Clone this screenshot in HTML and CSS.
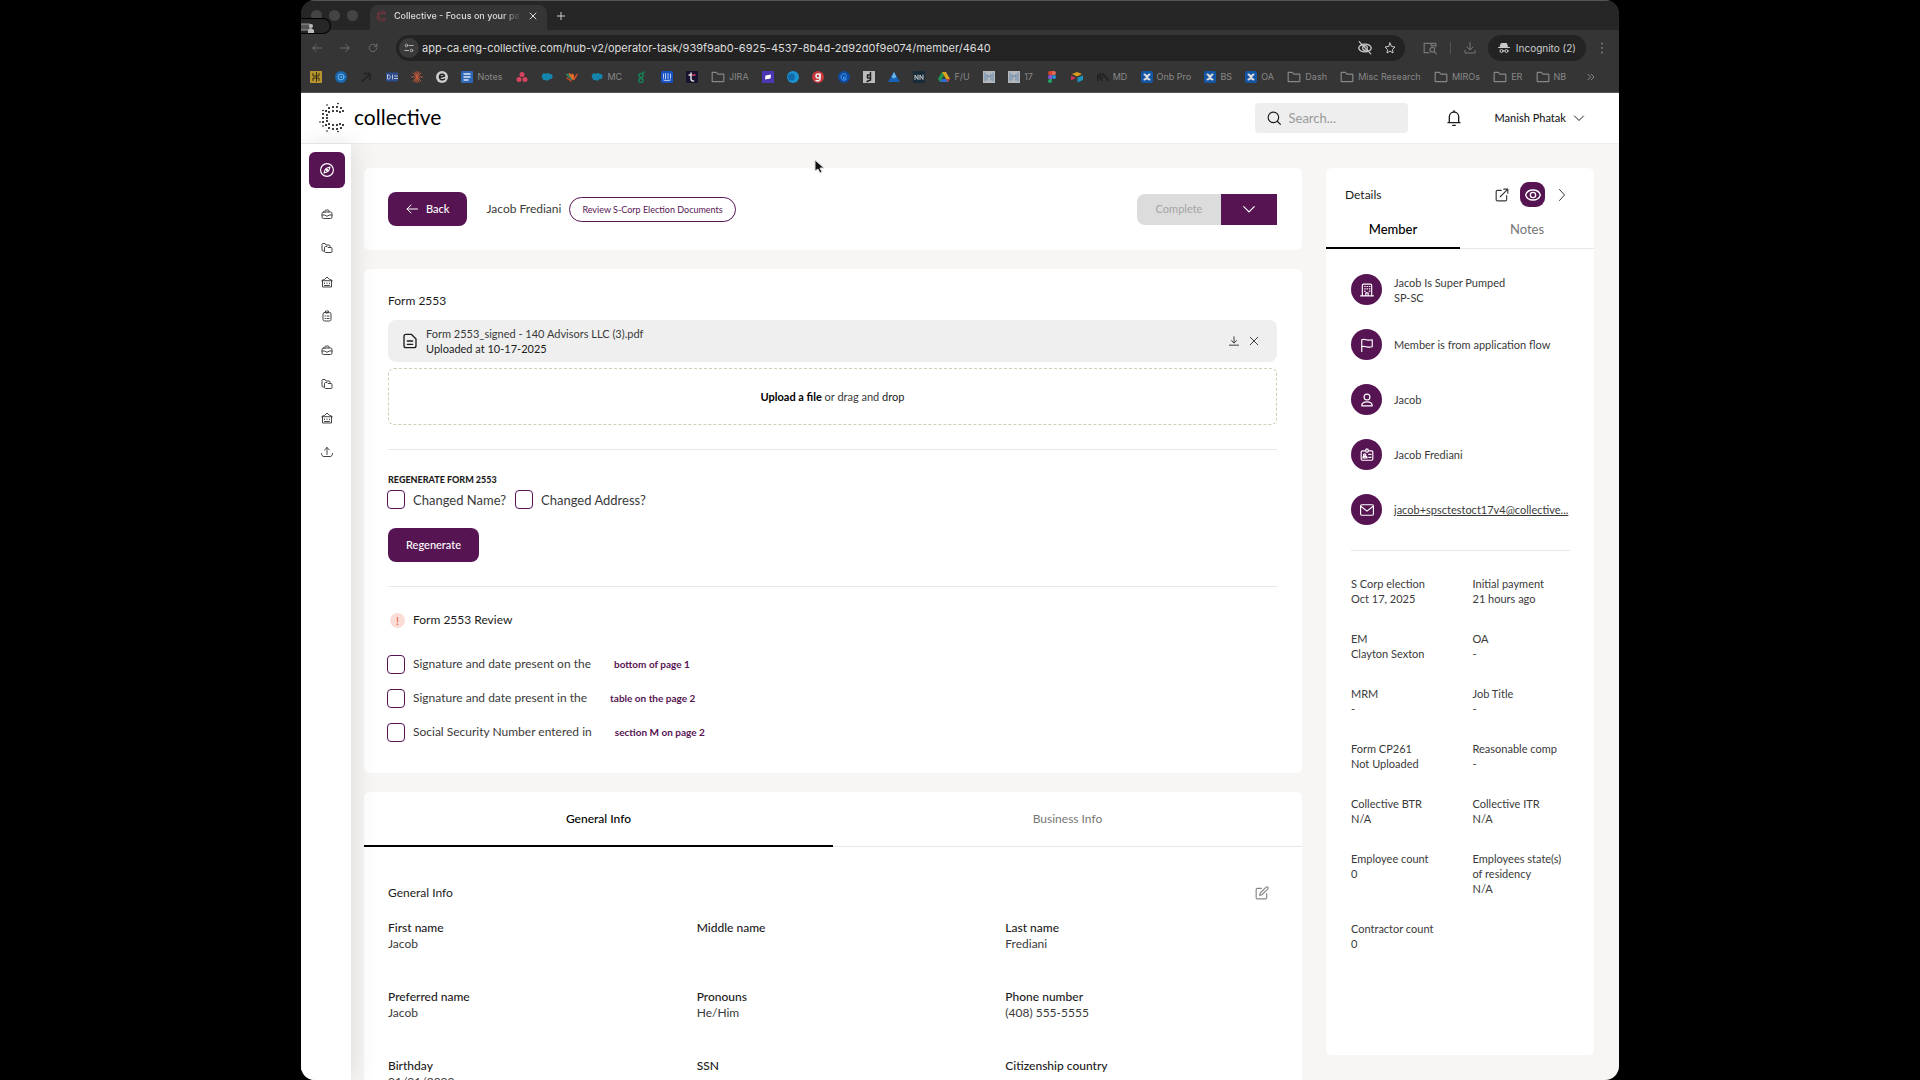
FILE: index.html
```
<!DOCTYPE html>
<html lang="en">
<head>
  <meta charset="UTF-8">
  <meta name="viewport" content="width=device-width, initial-scale=1.0">
  <title>Collective - Focus on your passion</title>
  <link rel="stylesheet" href="styles.css">
</head>
<body>
  <!-- Icon sprite -->
  <svg class="sprite" aria-hidden="true">
    <symbol id="i-briefcase" viewBox="0 0 24 24"><rect x="2" y="8" width="20" height="13" rx="3"/><path d="M8 8V6a2 2 0 0 1 2-2h4a2 2 0 0 1 2 2v2M2 14h6l2 2h4l2-2h6"/></symbol>
    <symbol id="i-folders" viewBox="0 0 24 24"><path d="M5 18H4a2 2 0 0 1-2-2V5a2 2 0 0 1 2-2h4l2 3h6a2 2 0 0 1 2 2v1"/><path d="M7 11a2 2 0 0 1 2-2h3l2 2h6a2 2 0 0 1 2 2v6a2 2 0 0 1-2 2H9a2 2 0 0 1-2-2z"/></symbol>
    <symbol id="i-bank" viewBox="0 0 24 24"><path d="M2 9l3-2h2l5-5 5 5h2l3 2zM3 9v13h18V9M7 14v1M12 14v1M17 14v1M7 19h10"/></symbol>
    <symbol id="i-clipboard" viewBox="0 0 24 24"><rect x="4" y="5" width="16" height="17" rx="3"/><path d="M9 5V2h6v3zM8 12h1M12 12h4M8 17h1M12 17h4"/></symbol>
    <symbol id="i-upload" viewBox="0 0 24 24"><path d="M12 17V3M7 8l5-5 5 5M1 15c0 4 2 6 5 6h12c3 0 5-2 5-6"/></symbol>
    <symbol id="i-compass" viewBox="0 0 24 24"><circle cx="12" cy="12" r="11"/><path d="M17 7l-2 6c-1 2-2 2-8 4l2-6c1-2 2-2 8-4z"/><circle cx="12" cy="12" r="1"/></symbol>
    <symbol id="i-back" viewBox="0 0 24 24"><path d="M23 12H2M10 4l-8 8 8 8"/></symbol>
    <symbol id="i-down" viewBox="0 0 24 24"><path d="M3 8l9 9 9-9"/></symbol>
    <symbol id="i-right" viewBox="0 0 24 24"><path d="M7 1l10 11L7 23"/></symbol>
    <symbol id="i-search" viewBox="0 0 24 24"><circle cx="11" cy="11" r="9"/><path d="M18 18l5 5"/></symbol>
    <symbol id="i-bell" viewBox="0 0 24 24"><path d="M12 1v2M5 19V10a7 7 0 0 1 14 0v9M3 19h18M10 23h4"/></symbol>
    <symbol id="i-file" viewBox="0 0 24 24"><path d="M14 2H6a3 3 0 0 0-3 3v14a3 3 0 0 0 3 3h12a3 3 0 0 0 3-3V9zM8 12h8M8 17h8"/></symbol>
    <symbol id="i-download" viewBox="0 0 24 24"><path d="M12 2v14M6 11l6 6 6-6M1 22h22"/></symbol>
    <symbol id="i-close" viewBox="0 0 24 24"><path d="M3 3l18 18M21 3L3 21"/></symbol>
    <symbol id="i-external" viewBox="0 0 24 24"><path d="M11 4H4a2 2 0 0 0-2 2v14a2 2 0 0 0 2 2h14a2 2 0 0 0 2-2v-7M15 2h7v7M22 2L9 15"/></symbol>
    <symbol id="i-eye" viewBox="0 0 24 24"><path d="M1 12c3-10 19-10 22 0-3 10-19 10-22 0z"/><circle cx="12" cy="12" r="4"/></symbol>
    <symbol id="i-edit" viewBox="0 0 24 24"><path d="M11 4H4a2 2 0 0 0-2 2v14a2 2 0 0 0 2 2h14a2 2 0 0 0 2-2v-7M19 2a2 2 0 0 1 3 3L12 15l-4 1 1-4z"/></symbol>
    <symbol id="i-building" viewBox="0 0 24 24"><path d="M1 22h22M4 22V4a2 2 0 0 1 2-2h12a2 2 0 0 1 2 2v18M10 22v-5h4v5M8 6h1M12 6h1M16 6h1M8 10h1M12 10h1M16 10h1M8 14h1M16 14h1"/></symbol>
    <symbol id="i-flag" viewBox="0 0 24 24"><path d="M3 23V3c6-3 9 3 18 0v12c-9 3-12-3-18 0"/></symbol>
    <symbol id="i-user" viewBox="0 0 24 24"><circle cx="12" cy="7" r="5"/><path d="M3 22c0-9 18-9 18 0z"/></symbol>
    <symbol id="i-badge" viewBox="0 0 24 24"><path d="M9 5H4a2 2 0 0 0-2 2v12a2 2 0 0 0 2 2h16a2 2 0 0 0 2-2V7a2 2 0 0 0-2-2h-5M15 11h4M15 16h4M5 17c0-4 7-4 7 0z"/><rect x="10" y="2" width="4" height="5" rx="1"/><circle cx="8" cy="12" r="2"/></symbol>
    <symbol id="i-mail" viewBox="0 0 24 24"><rect x="1" y="3" width="22" height="18" rx="2"/><path d="M2 6l10 8 10-8"/></symbol>
    <symbol id="i-folder" viewBox="0 0 24 24"><path d="M2 19V5a1 1 0 0 1 1-1h6l3 3h9a1 1 0 0 1 1 1v11a1 1 0 0 1-1 1H3a1 1 0 0 1-1-1z"/></symbol>
    <symbol id="i-reload" viewBox="0 0 24 24"><path d="M21 12a9 9 0 1 1-3-7l3 3M21 2v6h-6"/></symbol>
    <symbol id="i-tune" viewBox="0 0 24 24"><circle cx="6" cy="6" r="3"/><circle cx="18" cy="18" r="3"/><path d="M13 6h9M2 18h9"/></symbol>
    <symbol id="i-hidden" viewBox="0 0 24 24"><path d="M1 12c3-9 19-9 22 0-3 9-19 9-22 0zM2 1l20 21"/><circle cx="12" cy="12" r="4"/></symbol>
    <symbol id="i-star" viewBox="0 0 24 24"><path d="M12 2l3 7 7 1-5 5 1 7-6-4-6 4 1-7-5-5 7-1z"/></symbol>
    <symbol id="i-tabsearch" viewBox="0 0 24 24"><path d="M10 20H2V4h20v6M14 4v4h8"/><circle cx="16" cy="15" r="4"/><path d="M19 18l4 4"/></symbol>
    <symbol id="i-tray" viewBox="0 0 24 24"><path d="M12 1v14M6 10l6 6 6-6M2 17v5h20v-5"/></symbol>
    <symbol id="i-cloud" viewBox="0 0 24 24"><path fill="#1585ad" stroke="none" d="M2 9c0-4 5-6 8-3 2-3 6-2 7 0 5-1 7 3 6 7-1 3-4 4-6 3-2 4-6 4-8 2-4 1-6-1-6-4-2-1-2-3-1-5z"/></symbol>
    <symbol id="i-x" viewBox="0 0 24 24"><rect width="24" height="24" rx="4" fill="#1456a6" stroke="none"/><path stroke="#ddd" stroke-width="4" d="M7 7c2 0 2 1 4 4s3 6 6 6M17 7c-2 0-2 1-4 4s-3 6-6 6"/></symbol>
    <symbol id="i-m" viewBox="0 0 24 24"><rect width="24" height="24" fill="#b5b9bd" stroke="none"/><path stroke="#668bad" d="M4 4v16M20 4v16M8 18V7l4 5 4-5v11"/></symbol>
    <symbol id="i-logo" viewBox="0 0 26 31">
      <path d="M10 6h0M14 5h0M18 5h0M22 6h0M24 9h0M7 9h0M10 10h0M14 9h0M18 9h0M21 10h0M4 12h0M8 13h0M4 16h0M8 16h0M4 20h0M8 19h0M7 23h0M10 22h0M14 23h0M18 23h0M21 22h0M24 23h0M10 26h0M14 27h0M18 27h0M22 26h0"/>
      <path stroke-width="1.6" d="M8 3h0M19 1.5h0M4 8.5h0M1 20h0M4 24h0M8 29h0M19 29.5h0"/>
    </symbol>
  </svg>

  <div class="window">
    <!-- Browser chrome -->
    <div class="tab-strip">
      <div class="lights"><span></span><span></span><span></span></div>
      <div class="tab">
        <svg class="icon favicon dots"><use href="#i-logo"/></svg>
        <span class="tab-title">Collective - Focus on your pa</span>
        <button class="plain" aria-label="Close tab"><svg class="icon s8"><use href="#i-close"/></svg></button>
      </div>
      <button class="plain new-tab" aria-label="New tab"><svg class="icon s8" viewBox="0 0 24 24"><path d="M12 1v22M1 12h22"/></svg></button>
      <div class="share-pill"><svg width="14" height="10" viewBox="0 0 14 10"><path fill="#555" stroke="#999" d="M0 1h9v6H0"/><circle cx="10" cy="3" r="2" fill="#bbb"/><path fill="#bbb" d="M7 10V7l3-2 3 2v3z"/></svg></div>
    </div>

    <div class="toolbar">
      <button class="plain dim" aria-label="Back"><svg class="icon s10"><use href="#i-back"/></svg></button>
      <button class="plain dim flip" aria-label="Forward"><svg class="icon s10"><use href="#i-back"/></svg></button>
      <button class="plain dim" aria-label="Reload"><svg class="icon s10"><use href="#i-reload"/></svg></button>
      <div class="address">
        <span class="site-info"><svg class="icon s10"><use href="#i-tune"/></svg></span>
        <input type="text" aria-label="Address" value="app-ca.eng-collective.com/hub-v2/operator-task/939f9ab0-6925-4537-8b4d-2d92d0f9e074/member/4640">
        <svg class="icon s14"><use href="#i-hidden"/></svg>
        <svg class="icon s12"><use href="#i-star"/></svg>
      </div>
      <svg class="icon s14 dim"><use href="#i-tabsearch"/></svg>
      <span class="separator"></span>
      <svg class="icon s12 dim"><use href="#i-tray"/></svg>
      <div class="incognito">
        <svg class="icon s12" viewBox="0 0 24 24"><path fill="currentColor" d="M7 3h10l2 6H5z"/><path d="M1 11h22M10 18c1-1 3-1 4 0"/><circle cx="7" cy="18" r="3"/><circle cx="17" cy="18" r="3"/></svg>
        <span>Incognito (2)</span>
      </div>
      <button class="plain dim kebab" aria-label="Menu"><svg class="icon s12" viewBox="0 0 24 24"><path stroke-width="4" d="M12 3v0M12 12v0M12 21v0"/></svg></button>
    </div>

    <nav class="bookmarks" aria-label="Bookmarks">
      <a href="#"><svg class="icon s12" viewBox="0 0 24 24"><rect width="24" height="24" fill="#b8942e" stroke="none"/><path stroke="#332a10" d="M6 5v5h5M6 19v-5h5M18 5v5h-3M18 19v-5h-3M13 3v18"/></svg></a>
      <a href="#"><svg class="icon s12" viewBox="0 0 24 24"><circle cx="12" cy="12" r="12" fill="#1867b0" stroke="none"/><circle cx="12" cy="12" r="6" stroke="#6fb6e8"/><circle cx="12" cy="12" r="1" stroke="#6fb6e8"/></svg></a>
      <a href="#"><svg class="icon s12" viewBox="0 0 24 24"><path stroke="#222" stroke-width="3" d="M5 20L19 6M8 5h12v13"/></svg></a>
      <a href="#"><svg class="icon s12" viewBox="0 0 24 24"><rect y="3" width="24" height="18" fill="#2d4c8e" stroke="none"/><path stroke="#b9c2d6" d="M3 8v8h2c5 0 5-8 0-8zM13 8v8M17 10h7M17 15h7"/></svg></a>
      <a href="#"><svg class="icon s12" viewBox="0 0 24 24"><path stroke="#c25a3c" d="M12 1v22M1 12h22M4 4l16 16M20 4L4 20M8 2l8 20M16 2L8 22"/></svg></a>
      <a href="#"><svg class="icon s12" viewBox="0 0 24 24"><circle cx="12" cy="12" r="12" fill="#ccc" stroke="none"/><path stroke="#222" stroke-width="3" d="M7 13l10-3c-1-5-10-5-10 2 0 6 6 7 10 4"/></svg></a>
      <a href="#"><svg class="icon s12" viewBox="0 0 24 24"><rect width="24" height="24" rx="2" fill="#2d66b5" stroke="none"/><path stroke="#dde6f5" stroke-width="3" d="M6 6h12M6 12h12M6 18h8"/></svg>Notes</a>
      <a href="#"><svg class="icon s12" viewBox="0 0 24 24"><g fill="#d9435f" stroke="none"><circle cx="12" cy="7" r="5"/><circle cx="6" cy="17" r="5"/><circle cx="18" cy="17" r="5"/></g></svg></a>
      <a href="#"><svg class="icon s12"><use href="#i-cloud"/></svg></a>
      <a href="#"><svg class="icon s12" viewBox="0 0 24 24"><path stroke="#27845c" stroke-width="4" d="M2 7l9 9"/><path stroke="#e46d2c" stroke-width="4" d="M7 6l7 10M13 7l3 9"/><path stroke="#c94a2a" stroke-width="3" d="M22 7l-6 10M2 14l8 6"/></svg></a>
      <a href="#"><svg class="icon s12"><use href="#i-cloud"/></svg>MC</a>
      <a href="#"><svg class="icon s12" viewBox="0 0 24 24"><g stroke="#168257" stroke-width="3"><circle cx="12" cy="9" r="4"/><circle cx="12" cy="19" r="4"/><path d="M15 5l3-3"/></g></svg></a>
      <a href="#"><svg class="icon s12" viewBox="0 0 24 24"><rect width="24" height="24" rx="3" fill="#1750c0" stroke="none"/><path stroke="#b9cdf2" d="M5 6v8M9 5v11M14 5v11M19 6v8M5 18c4 2 10 2 14 0"/></svg></a>
      <a href="#"><svg class="icon s12" viewBox="0 0 24 24"><rect width="24" height="24" fill="#1b1230" stroke="none"/><path stroke="#ddd" stroke-width="3" d="M10 4v12c0 4 2 4 5 4M6 8h5"/><path stroke="#e0405d" stroke-width="3" d="M13 8h5"/></svg></a>
      <a href="#"><svg class="icon s14"><use href="#i-folder"/></svg>JIRA</a>
      <a href="#"><svg class="icon s12" viewBox="0 0 24 24"><rect width="24" height="24" fill="#4d36b3" stroke="none"/><path fill="#fff" stroke="none" d="M7 9l11-2-1 8-11 2z"/></svg></a>
      <a href="#"><svg class="icon s12" viewBox="0 0 24 24"><circle cx="12" cy="12" r="12" fill="#1c93cf" stroke="none"/><circle cx="9" cy="12" r="7" fill="#136aa8" stroke="none"/></svg></a>
      <a href="#"><svg class="icon s12" viewBox="0 0 24 24"><circle cx="12" cy="12" r="12" fill="#c93a3c" stroke="none"/><circle cx="12" cy="10" r="4" stroke="#eee" stroke-width="3"/><path stroke="#eee" stroke-width="3" d="M16 6v10c0 4-5 4-8 3"/></svg></a>
      <a href="#"><svg class="icon s12" viewBox="0 0 24 24"><circle cx="12" cy="12" r="12" fill="#0f4a9c" stroke="none"/><path stroke="#3fa0ff" d="M17 8c-4-5-11-2-11 4s7 9 11 4h-6v-4h6"/></svg></a>
      <a href="#"><svg class="icon s12" viewBox="0 0 24 24"><rect width="24" height="24" fill="#bbb" stroke="none"/><path stroke="#222" stroke-width="3" d="M15 3v15l-7 3M14 8H9v6h5"/></svg></a>
      <a href="#"><svg class="icon s12" viewBox="0 0 24 24"><path fill="#1663b8" stroke="none" d="M12 2l12 20H0z"/><path fill="#69b4ea" stroke="none" d="M12 2l5 10-5 3-5-3z"/></svg></a>
      <a href="#"><svg class="icon s12" viewBox="0 0 24 24"><rect width="24" height="24" rx="2" fill="#172b38" stroke="none"/><path stroke="#ccc" d="M4 17V8l6 9V8M14 17V8l6 9V8"/></svg></a>
      <a href="#"><svg class="icon s12" viewBox="0 0 24 24"><g stroke="none"><path fill="#219653" d="M8 2L0 16l4 6 8-13z"/><path fill="#d9a520" d="M8 2h8l8 14h-8z"/><path fill="#2c6fd1" d="M4 22h16l4-6H8z"/><path fill="#c63a2b" d="M16 16h8l-4 6z"/></g></svg>F/U</a>
      <a href="#"><svg class="icon s12"><use href="#i-m"/></svg></a>
      <a href="#"><svg class="icon s12"><use href="#i-m"/></svg>17</a>
      <a href="#"><svg class="icon s12" viewBox="0 0 24 24"><g stroke="none"><path fill="#d8452a" d="M12 0H8a4 4 0 0 0 0 8h4z"/><path fill="#e0675a" d="M12 0h4a4 4 0 0 1 0 8h-4z"/><path fill="#8a50d8" d="M12 8H8a4 4 0 0 0 0 8h4z"/><circle cx="16" cy="12" r="4" fill="#2594d1"/><path fill="#1fa463" d="M12 16H8a4 4 0 1 0 4 4z"/></g></svg></a>
      <a href="#"><svg class="icon s12" viewBox="0 0 24 24"><g stroke="none"><path fill="#d99b1c" d="M2 6l10-4 10 4-10 5z"/><path fill="#c73555" d="M0 9l10 5-10 5z"/><path fill="#1f93bd" d="M13 13l11-4v9l-11 5z"/></g></svg></a>
      <a href="#"><svg class="icon s12" viewBox="0 0 24 24"><path stroke="#1f1f1f" stroke-width="3" d="M1 19V8l9 11M11 5l12 14M5 5l6 8"/></svg>MD</a>
      <a href="#"><svg class="icon s12"><use href="#i-x"/></svg>Onb Pro</a>
      <a href="#"><svg class="icon s12"><use href="#i-x"/></svg>BS</a>
      <a href="#"><svg class="icon s12"><use href="#i-x"/></svg>OA</a>
      <a href="#"><svg class="icon s14"><use href="#i-folder"/></svg>Dash</a>
      <a href="#"><svg class="icon s14"><use href="#i-folder"/></svg>Misc Research</a>
      <a href="#"><svg class="icon s14"><use href="#i-folder"/></svg>MIROs</a>
      <a href="#"><svg class="icon s14"><use href="#i-folder"/></svg>ER</a>
      <a href="#"><svg class="icon s14"><use href="#i-folder"/></svg>NB</a>
      <a href="#" class="more" aria-label="More bookmarks"><svg class="icon s8" viewBox="0 0 24 24"><path d="M3 4l8 8-8 8M13 4l8 8-8 8"/></svg></a>
    </nav>

    <!-- App header -->
    <header class="app-header">
      <a class="brand" href="#"><svg class="brand-mark dots"><use href="#i-logo"/></svg>collective</a>
      <label class="search">
        <svg class="icon s14"><use href="#i-search"/></svg>
        <input type="search" placeholder="Search..." aria-label="Search">
      </label>
      <button class="plain bell" aria-label="Notifications"><svg class="icon s16"><use href="#i-bell"/></svg></button>
      <button class="plain account">Manish Phatak <svg class="icon s12"><use href="#i-down"/></svg></button>
    </header>

    <div class="app-body">
      <nav class="sidebar" aria-label="Main">
        <a href="#" class="active"><svg class="icon s14"><use href="#i-compass"/></svg></a>
        <a href="#"><svg class="icon s12"><use href="#i-briefcase"/></svg></a>
        <a href="#"><svg class="icon s12"><use href="#i-folders"/></svg></a>
        <a href="#"><svg class="icon s12"><use href="#i-bank"/></svg></a>
        <a href="#"><svg class="icon s12"><use href="#i-clipboard"/></svg></a>
        <a href="#"><svg class="icon s12"><use href="#i-briefcase"/></svg></a>
        <a href="#"><svg class="icon s12"><use href="#i-folders"/></svg></a>
        <a href="#"><svg class="icon s12"><use href="#i-bank"/></svg></a>
        <a href="#"><svg class="icon s12"><use href="#i-upload"/></svg></a>
      </nav>

      <main class="content">
        <section class="card task-bar">
          <button class="btn"><svg class="icon s12"><use href="#i-back"/></svg>Back</button>
          <span class="member-name">Jacob Frediani</span>
          <span class="pill">Review S-Corp Election Documents</span>
          <div class="split">
            <button class="complete" disabled>Complete</button>
            <button class="toggle" aria-label="More actions"><svg class="icon s14"><use href="#i-down"/></svg></button>
          </div>
        </section>

        <section class="card form-card">
          <h2>Form 2553</h2>
          <div class="file">
            <svg class="icon s16"><use href="#i-file"/></svg>
            <div class="file-text">
              <div>Form 2553_signed - 140 Advisors LLC (3).pdf</div>
              <div class="dark">Uploaded at 10-17-2025</div>
            </div>
            <button class="plain" aria-label="Download"><svg class="icon s10"><use href="#i-download"/></svg></button>
            <button class="plain" aria-label="Remove"><svg class="icon s10"><use href="#i-close"/></svg></button>
          </div>
          <button class="dropzone"><b>Upload a file</b> or drag and <span class="dark">drop</span></button>

          <div class="regenerate">
            <h3>Regenerate Form 2553</h3>
            <div class="checks">
              <label><input type="checkbox">Changed Name?</label>
              <label><input type="checkbox">Changed Address?</label>
            </div>
            <button class="btn">Regenerate</button>
          </div>

          <div class="review">
            <h2><span class="alert">!</span>Form 2553 Review</h2>
            <div class="review-row">
              <label><input type="checkbox">Signature and date present on the</label>
              <a href="#">bottom of page 1</a>
            </div>
            <div class="review-row">
              <label><input type="checkbox">Signature and date present in the</label>
              <a href="#">table on the page 2</a>
            </div>
            <div class="review-row">
              <label><input type="checkbox">Social Security Number entered in</label>
              <a href="#">section M on page 2</a>
            </div>
          </div>
        </section>

        <section class="card">
          <div class="tabs info-tabs">
            <button class="selected">General Info</button>
            <button>Business Info</button>
          </div>
          <div class="info">
            <div class="info-head">
              <h2>General Info</h2>
              <button class="plain edit" aria-label="Edit"><svg class="icon s14"><use href="#i-edit"/></svg></button>
            </div>
            <dl class="fields">
              <div><dt>First name</dt><dd>Jacob</dd></div>
              <div><dt>Middle name</dt><dd></dd></div>
              <div><dt>Last name</dt><dd>Frediani</dd></div>
              <div><dt>Preferred name</dt><dd>Jacob</dd></div>
              <div><dt>Pronouns</dt><dd>He/Him</dd></div>
              <div><dt>Phone number</dt><dd>(408) 555-5555</dd></div>
              <div><dt>Birthday</dt><dd>01/01/2000</dd></div>
              <div><dt>SSN</dt><dd></dd></div>
              <div><dt>Citizenship country</dt><dd></dd></div>
            </dl>
          </div>
        </section>
      </main>

      <aside class="details">
        <div class="details-head">
          <h2>Details</h2>
          <button class="plain" aria-label="Open in new tab"><svg class="icon s14"><use href="#i-external"/></svg></button>
          <button class="eye" aria-label="Show"><svg class="icon s16"><use href="#i-eye"/></svg></button>
          <button class="plain" aria-label="Collapse"><svg class="icon s12"><use href="#i-right"/></svg></button>
        </div>
        <div class="tabs detail-tabs">
          <button class="selected">Member</button>
          <button>Notes</button>
        </div>
        <ul class="facts">
          <li><span class="round"><svg class="icon s14"><use href="#i-building"/></svg></span><span>Jacob Is Super Pumped<br>SP-SC</span></li>
          <li><span class="round"><svg class="icon s14"><use href="#i-flag"/></svg></span><span>Member is from application flow</span></li>
          <li><span class="round"><svg class="icon s14"><use href="#i-user"/></svg></span><span>Jacob</span></li>
          <li><span class="round"><svg class="icon s14"><use href="#i-badge"/></svg></span><span>Jacob Frediani</span></li>
          <li><span class="round"><svg class="icon s14"><use href="#i-mail"/></svg></span><a href="#">jacob+spsctestoct17v4@collective...</a></li>
        </ul>
        <dl class="stats">
          <div><dt>S Corp election</dt><dd>Oct 17, 2025</dd></div>
          <div><dt>Initial payment</dt><dd>21 hours ago</dd></div>
          <div><dt>EM</dt><dd>Clayton Sexton</dd></div>
          <div><dt>OA</dt><dd>-</dd></div>
          <div><dt>MRM</dt><dd>-</dd></div>
          <div><dt>Job Title</dt><dd>-</dd></div>
          <div><dt>Form CP261</dt><dd>Not Uploaded</dd></div>
          <div><dt>Reasonable comp</dt><dd>-</dd></div>
          <div><dt>Collective BTR</dt><dd>N/A</dd></div>
          <div><dt>Collective ITR</dt><dd>N/A</dd></div>
          <div><dt>Employee count</dt><dd>0</dd></div>
          <div><dt>Employees state(s)<br>of residency</dt><dd>N/A</dd></div>
          <div><dt>Contractor count</dt><dd>0</dd></div>
        </dl>
      </aside>
    </div>

    <!-- Mouse pointer -->
    <svg class="pointer" viewBox="0 0 10 15"><path fill="#111" stroke="#ddd" stroke-width="1" d="M1 1v11l3-2 2 4 2-1-2-4h4z"/></svg>
  </div>
</body>
</html>
```

FILE: styles.css
```
:root {
  --purple: #571453;
  --text: #3a3a3a;
  --dark: #1c1c1c;
  --muted: #767676;
  --line: #e8e8e8;
  --page: #f7f6f5;
}

* {
  box-sizing: border-box;
}

body {
  margin: 0;
  padding: 0 301px;
  background: #000;
  color: var(--text);
  font-family: Lato, sans-serif;
  font-size: 12px;
  line-height: 16px;
}

h2, h3, dl, dd, ul {
  margin: 0;
  padding: 0;
}

h2 {
  color: var(--dark);
  font-size: 12px;
  font-weight: 400;
  line-height: 16px;
}

a {
  color: inherit;
  text-decoration: none;
}

button, input {
  font: inherit;
  color: inherit;
}

button {
  cursor: pointer;
}

.sprite {
  display: none;
}

.icon {
  flex: none;
  display: block;
  fill: none;
  stroke: currentColor;
  stroke-width: 2;
  stroke-linecap: round;
  stroke-linejoin: round;
}

.s8 { width: 8px; height: 8px; stroke-width: 3; }
.s10 { width: 10px; height: 10px; }
.s12 { width: 12px; height: 12px; }
.s14 { width: 14px; height: 14px; }
.s16 { width: 16px; height: 16px; }

.dots {
  fill: none;
  stroke: currentColor;
  stroke-width: 2;
  stroke-linecap: round;
}

.plain {
  padding: 0;
  border: none;
  background: none;
}

.dim {
  color: #777;
}

.window {
  position: relative;
  display: flex;
  flex-direction: column;
  height: 100vh;
  overflow: hidden;
  border-radius: 14px;
  background: #353535;
}

/* Browser chrome */
.tab-strip, .toolbar, .bookmarks {
  flex: none;
  display: flex;
  align-items: center;
  font-family: Inter, sans-serif;
  font-size: 10px;
}

.tab-strip {
  position: relative;
  height: 30px;
  border-top: 1px solid #555;
  background: #262626;
}

.lights {
  display: flex;
  gap: 7px;
  padding: 0 12px 0 10px;
}

.lights span {
  width: 11px;
  height: 11px;
  border-radius: 50%;
  background: #444;
}

.tab {
  align-self: stretch;
  display: flex;
  align-items: center;
  gap: 8px;
  width: 177px;
  margin-top: 4px;
  padding: 0 10px 4px 6px;
  border-radius: 8px 8px 0 0;
  background: #353535;
  color: #ddd;
}

.favicon {
  width: 10px;
  height: 12px;
  color: #c8374a;
}

.tab-title {
  flex: 1;
  white-space: nowrap;
  font-size: 9px;
  font-weight: 500;
  mask-image: linear-gradient(to right, #000 85%, transparent);
}

.new-tab {
  margin-left: 10px;
  color: #ccc;
}

.share-pill {
  position: absolute;
  left: 0;
  top: 17px;
  width: 30px;
  height: 16px;
  padding: 2px 0;
  border: 1px solid #000;
  border-left: none;
  border-radius: 0 8px 8px 0;
  background: #262626;
}

.toolbar {
  gap: 18px;
  height: 35px;
  padding: 0 14px 0 11px;
}

.flip {
  transform: scaleX(-1);
}

.address {
  flex: 1;
  display: flex;
  align-items: center;
  gap: 12px;
  height: 26px;
  padding: 0 9px 0 3px;
  border-radius: 13px;
  background: #232323;
  color: #ccc;
}

.site-info {
  display: grid;
  place-items: center;
  width: 20px;
  height: 20px;
  border-radius: 50%;
  background: #3a3a3a;
}

.address input {
  flex: 1;
  padding: 0;
  margin-left: -9px;
  border: none;
  background: none;
  color: #ddd;
  font-size: 11px;
}

.separator {
  width: 1px;
  height: 12px;
  margin: 0 -5px;
  background: #555;
}

.incognito {
  display: flex;
  align-items: center;
  gap: 6px;
  height: 26px;
  margin-left: -6px;
  padding: 0 10px;
  border-radius: 13px;
  background: #232323;
  color: #ccc;
}

.kebab {
  margin: 0 -3px 0 -8px;
}

.bookmarks {
  justify-content: space-between;
  height: 28px;
  padding: 0 23px 4px 9px;
  border-bottom: 1px solid #555;
  color: #888;
  font-size: 9px;
}

.bookmarks a {
  display: flex;
  align-items: center;
  gap: 4px;
  white-space: nowrap;
}

.more {
  margin-left: 8px;
}

/* App header */
.app-header {
  flex: none;
  display: flex;
  align-items: center;
  height: 51px;
  padding: 0 34px 0 18px;
  border-bottom: 1px solid #eee;
  background: #fff;
  color: var(--dark);
}

.brand {
  display: flex;
  align-items: center;
  gap: 9px;
  padding-bottom: 2px;
  color: #000;
  font-size: 21px;
  line-height: 26px;
}

.brand-mark {
  width: 26px;
  height: 31px;
}

.search {
  display: flex;
  align-items: center;
  gap: 8px;
  width: 153px;
  height: 30px;
  margin-left: auto;
  padding: 0 12px;
  border-radius: 4px;
  background: #eee;
  font-size: 13px;
}

.search input {
  width: 100%;
  padding: 0;
  border: none;
  background: none;
}

.search input::placeholder {
  color: #999;
}

.bell {
  margin-left: 38px;
}

.account {
  display: flex;
  align-items: center;
  gap: 7px;
  margin-left: 33px;
  font-size: 11px;
  font-weight: 500;
}

.app-body {
  flex: 1;
  display: flex;
  min-height: 0;
  background: var(--page);
}

/* Sidebar */
.sidebar {
  z-index: 1;
  flex: none;
  display: flex;
  flex-direction: column;
  align-items: center;
  width: 50px;
  padding: 8px 0 0 2px;
  background: #fff;
  box-shadow: 4px 0 24px rgba(0, 0, 0, 0.1);
  color: #444;
}

.sidebar a {
  display: grid;
  place-items: center;
  width: 34px;
  height: 34px;
}

.sidebar .active {
  width: 36px;
  height: 36px;
  margin-bottom: 9px;
  border-radius: 6px;
  background: var(--purple);
  color: #fff;
}

/* Main column */
.content {
  flex: 1;
  display: flex;
  flex-direction: column;
  gap: 19px;
  min-width: 0;
  padding: 24px 24px 0 13px;
}

.card {
  flex: none;
  border-radius: 6px;
  background: #fff;
}

.btn {
  display: inline-flex;
  align-items: center;
  gap: 8px;
  height: 34px;
  padding: 0 18px;
  border: none;
  border-radius: 8px;
  background: var(--purple);
  color: #fff;
  font-size: 11px;
  font-weight: 500;
}

.task-bar {
  display: flex;
  align-items: center;
  height: 82px;
  padding: 0 25px 0 24px;
}

.member-name {
  margin: 0 8px 0 19px;
}

.pill {
  height: 25px;
  padding: 0 12px;
  border: 1px solid var(--purple);
  border-radius: 13px;
  color: var(--purple);
  font-size: 9px;
  line-height: 23px;
}

.split {
  display: flex;
  height: 31px;
  margin-left: auto;
}

.split button {
  border: none;
}

.complete {
  width: 84px;
  border-radius: 8px 0 0 8px;
  background: #dcdcdc;
  color: #a5a5a5;
  font-size: 11px;
}

.toggle {
  display: grid;
  place-items: center;
  width: 56px;
  background: var(--purple);
  color: #fff;
}

/* Form 2553 */
.form-card {
  padding: 24px 25px 24px 24px;
}

.file {
  display: flex;
  align-items: center;
  gap: 10px;
  height: 42px;
  margin-top: 11px;
  padding: 0 18px 0 14px;
  border-radius: 8px;
  background: #efefef;
  color: var(--dark);
}

.file-text {
  flex: 1;
  margin-left: -2px;
  color: var(--text);
  font-size: 11px;
  line-height: 15px;
}

.dark {
  color: var(--dark);
}

.dropzone {
  width: 100%;
  height: 57px;
  margin-top: 6px;
  border: 1px dashed #cfcfb8;
  border-radius: 6px;
  background: none;
  font-size: 11px;
}

.dropzone b {
  color: #000;
}

.regenerate, .review {
  margin-top: 24px;
  padding-top: 24px;
  border-top: 1px solid var(--line);
}

h3 {
  color: var(--dark);
  font-size: 9px;
  font-weight: 900;
  line-height: 12px;
  text-transform: uppercase;
}

.checks {
  display: flex;
  gap: 10px;
  margin: 4px 0 19px;
  font-size: 13px;
}

.form-card label {
  display: flex;
  align-items: center;
  gap: 8px;
  margin-left: -1px;
}

input[type="checkbox"] {
  appearance: none;
  width: 18px;
  height: 19px;
  margin: 0;
  border: 1px solid var(--purple);
  border-radius: 4px;
  background: #fff;
}

.review {
  padding-top: 25px;
}

.review h2 {
  display: flex;
  align-items: center;
  gap: 8px;
  margin: 0 0 19px 2px;
}

.alert {
  width: 15px;
  height: 15px;
  border-radius: 50%;
  background: #fbdcd7;
  color: #e0603c;
  font-size: 11px;
  line-height: 15px;
  text-align: center;
}

.review-row {
  display: flex;
  align-items: center;
  gap: 23px;
  height: 34px;
}

.review-row a {
  color: var(--purple);
  font-size: 10px;
  font-weight: 700;
}

/* Tabs */
.tabs {
  display: flex;
}

.tabs button {
  flex: 1;
  padding: 0;
  border: none;
  border-bottom: 1px solid var(--line);
  background: none;
  color: var(--muted);
}

.tabs .selected {
  border-bottom: 2px solid #000;
  color: #000;
  font-weight: 500;
}

.info-tabs {
  height: 55px;
}

.info {
  padding: 38px 25px 0 24px;
}

.info-head {
  display: flex;
  justify-content: space-between;
  padding-right: 8px;
}

.edit {
  color: #888;
}

.fields {
  display: grid;
  grid-template-columns: repeat(3, 1fr);
  gap: 37px 37px;
  margin-top: 19px;
}

.fields div {
  height: 32px;
}

.fields dt {
  color: var(--dark);
  font-weight: 500;
}

/* Details panel */
.details {
  flex: none;
  width: 268px;
  margin: 24px 25px 25px 0;
  border-radius: 6px;
  background: #fff;
  font-size: 11px;
  line-height: 15px;
}

.details-head {
  display: flex;
  align-items: center;
  gap: 11px;
  padding: 14px 26px 0 19px;
}

.details-head h2 {
  flex: 1;
}

.eye {
  display: grid;
  place-items: center;
  width: 25px;
  height: 25px;
  padding: 0;
  border: none;
  border-radius: 9px;
  background: var(--purple);
  color: #fff;
}

.detail-tabs {
  height: 42px;
  font-size: 13px;
}

.detail-tabs button {
  padding-top: 4px;
}

.facts {
  display: flex;
  flex-direction: column;
  gap: 24px;
  margin: 0 24px 0 25px;
  padding: 25px 0 25px;
  border-bottom: 1px solid var(--line);
  list-style: none;
}

.facts li {
  display: flex;
  align-items: center;
  gap: 12px;
  height: 31px;
  white-space: nowrap;
}

.facts a {
  text-decoration: underline;
}

.round {
  flex: none;
  display: grid;
  place-items: center;
  width: 31px;
  height: 31px;
  border-radius: 50%;
  background: var(--purple);
  color: #fff;
}

.stats {
  display: grid;
  grid-template-columns: 1fr 1fr;
  gap: 25px 24px;
  margin: 25px 24px 0 25px;
}

/* Pointer sits over the page */
.pointer {
  position: absolute;
  left: 513px;
  top: 159px;
  width: 10px;
  height: 15px;
  z-index: 2;
}
```
